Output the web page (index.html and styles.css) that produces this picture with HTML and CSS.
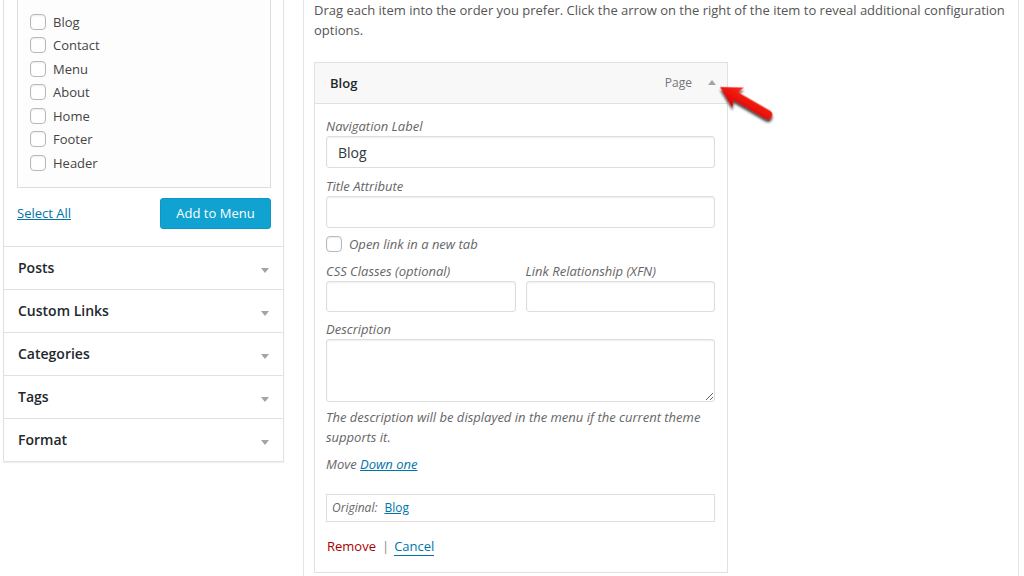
FILE: index.html
```html
<!DOCTYPE html>
<html lang="en">
<head>
<meta charset="utf-8">
<title>Menus</title>
<link rel="stylesheet" href="styles.css">
</head>
<body>
<div class="page">
  <aside class="side">
    <div class="pages-box">
      <ul class="checklist">
        <li><input type="checkbox" class="cb"><span>Blog</span></li>
        <li><input type="checkbox" class="cb"><span>Contact</span></li>
        <li><input type="checkbox" class="cb"><span>Menu</span></li>
        <li><input type="checkbox" class="cb"><span>About</span></li>
        <li><input type="checkbox" class="cb"><span>Home</span></li>
        <li><input type="checkbox" class="cb"><span>Footer</span></li>
        <li><input type="checkbox" class="cb"><span>Header</span></li>
      </ul>
      <div class="box-actions">
        <a href="#" class="link">Select All</a>
        <button class="btn-primary" type="button">Add to Menu</button>
      </div>
    </div>
    <div class="section"><h3 class="section-title">Posts</h3><span class="caret-down"></span></div>
    <div class="section"><h3 class="section-title">Custom Links</h3><span class="caret-down"></span></div>
    <div class="section"><h3 class="section-title">Categories</h3><span class="caret-down"></span></div>
    <div class="section"><h3 class="section-title">Tags</h3><span class="caret-down"></span></div>
    <div class="section"><h3 class="section-title">Format</h3><span class="caret-down"></span></div>
  </aside>

  <main class="menu-area">
    <p class="intro">Drag each item into the order you prefer. Click the arrow on the right of the item to reveal additional configuration options.</p>

    <div class="menu-item">
      <div class="item-bar">
        <span class="item-title">Blog</span>
        <span class="item-type">Page</span>
        <span class="caret-up"></span>
      </div>
      <div class="item-settings">
        <div class="field first">
          <label class="lbl">Navigation Label</label>
          <input class="text-input" type="text" value="Blog">
        </div>
        <div class="field">
          <label class="lbl">Title Attribute</label>
          <input class="text-input" type="text" value="">
        </div>
        <div class="check-row">
          <input type="checkbox" class="cb"><span class="lbl">Open link in a new tab</span>
        </div>
        <div class="field-pair">
          <div class="field">
            <label class="lbl">CSS Classes (optional)</label>
            <input class="text-input small" type="text" value="">
          </div>
          <div class="field">
            <label class="lbl">Link Relationship (XFN)</label>
            <input class="text-input small" type="text" value="">
          </div>
        </div>
        <div class="field desc">
          <label class="lbl">Description</label>
          <textarea class="text-area"></textarea>
        </div>
        <p class="help">The description will be displayed in the menu if the current theme supports it.</p>
        <p class="move"><span class="lbl">Move</span> <a href="#" class="link italic">Down one</a></p>
        <div class="original"><span class="orig-label">Original:</span> <a href="#" class="link">Blog</a></div>
        <div class="item-actions">
          <a href="#" class="remove">Remove</a>
          <span class="sep">|</span>
          <a href="#" class="cancel">Cancel</a>
        </div>
      </div>

      <svg class="callout-arrow" width="70" height="52" viewBox="0 0 70 52" aria-hidden="true">
        <defs>
          <filter id="sh" x="-30%" y="-30%" width="160%" height="160%">
            <feDropShadow dx="1.5" dy="2.5" stdDeviation="1.3" flood-color="#000" flood-opacity="0.75"/>
          </filter>
          <linearGradient id="rg" x1="0" y1="0" x2="0" y2="1">
            <stop offset="0" stop-color="#ff2a1a"/>
            <stop offset="1" stop-color="#d80000"/>
          </linearGradient>
        </defs>
        <g transform="translate(5 6) rotate(30)" filter="url(#sh)">
          <path d="M0 0 L21 -11.5 L18 -4.6 L55 -4.6 Q59.6 -4.6 59.6 0 Q59.6 4.6 55 4.6 L18 4.6 L21 11.5 Z" fill="url(#rg)"/>
        </g>
      </svg>
    </div>
  </main>
</div>
</body>
</html>
```

FILE: styles.css
```css
* { box-sizing: border-box; }

html, body {
  margin: 0;
  padding: 0;
  background: #fff;
}

body {
  font-family: "Open Sans", "Liberation Sans", sans-serif;
  font-size: 13px;
  line-height: 20px;
  color: #444;
}

.page {
  display: flex;
  align-items: flex-start;
  height: 576px;
  overflow: hidden;
}

/* ---------- left column ---------- */
.side {
  width: 281px;
  margin-left: 3px;
  border: 1px solid #e1e1e1;
  border-top: none;
  background: #fff;
  box-shadow: 0 1px 1px rgba(0, 0, 0, 0.06);
}

.pages-box {
  padding: 0 12px 17px 13px;
  border-bottom: 1px solid #e1e1e1;
}

.checklist {
  list-style: none;
  margin: 0;
  padding: 10px 0 12px 12px;
  border: 1px solid #dddddd;
  border-top: none;
  background: #fdfdfd;
}

.checklist li {
  display: flex;
  align-items: center;
  height: 23.5px;
  color: #444;
}

.cb {
  -webkit-appearance: none;
  appearance: none;
  width: 16px;
  height: 16px;
  margin: 0 7px 0 0;
  border: 1px solid #b4b9be;
  border-radius: 4px;
  background: #fff;
  box-shadow: inset 0 1px 2px rgba(0, 0, 0, 0.08);
  flex: none;
}

.box-actions {
  display: flex;
  justify-content: space-between;
  align-items: center;
  margin-top: 10px;
}

.link {
  color: #0073aa;
  text-decoration: underline;
}

.link.italic { font-style: italic; }

.btn-primary {
  font-family: inherit;
  font-size: 13px;
  height: 31px;
  width: 111px;
  padding: 0 10px;
  border: 1px solid #0c97c4;
  border-radius: 3px;
  background: #10a2d0;
  color: #fff;
}

.section {
  display: flex;
  align-items: center;
  justify-content: space-between;
  height: 43px;
  padding: 0 14px;
  border-bottom: 1px solid #e1e1e1;
}

.section:last-child { border-bottom: none; height: 42px; }

.section-title {
  margin: 0;
  font-size: 14px;
  font-weight: 600;
  color: #23282d;
}

.caret-down {
  width: 0;
  height: 0;
  margin-top: 6px;
  border-left: 4px solid transparent;
  border-right: 4px solid transparent;
  border-top: 5px solid #a0a5aa;
}

/* ---------- right column ---------- */
.menu-area {
  width: 716px;
  height: 576px;
  margin-left: 19px;
  padding: 1px 8px 0 10px;
  border-left: 1px solid #e5e5e5;
  border-right: 1px solid #e5e5e5;
}

.intro {
  margin: 0 0 22px;
  line-height: 19.5px;
  color: #555;
}

.menu-item {
  position: relative;
  width: 414px;
  border: 1px solid #e1e1e1;
  background: #fff;
}

.item-bar {
  display: flex;
  align-items: center;
  height: 41px;
  padding: 0 10px 0 15px;
  border-bottom: 1px solid #e1e1e1;
  background: #f8f8f8;
}

.item-title {
  font-weight: 600;
  color: #23282d;
  flex: 1;
}

.item-type {
  font-size: 12px;
  color: #72777c;
  margin-right: 16px;
}

.caret-up {
  width: 0;
  height: 0;
  margin-top: -1px;
  margin-right: 1px;
  border-left: 4.5px solid transparent;
  border-right: 4.5px solid transparent;
  border-bottom: 5px solid #a0a5aa;
}

.item-settings {
  padding: 12px 12px 16px 11px;
}

.lbl {
  font-style: italic;
  color: #666;
}

.field {
  display: flex;
  flex-direction: column;
  margin-bottom: 7px;
}

.field.first { margin-bottom: 8px; }

.text-input {
  height: 32px;
  width: 100%;
  padding: 0 11px;
  font-family: inherit;
  font-size: 14px;
  color: #32373c;
  border: 1px solid #dddddd;
  border-radius: 3px;
  background: #fff;
  box-shadow: inset 0 1px 2px rgba(0, 0, 0, 0.07);
}

.text-input.small { height: 31px; }

.check-row {
  display: flex;
  align-items: center;
  height: 20px;
  margin: -1px 0 7px;
}

.check-row .cb { margin-right: 7px; }

.field-pair {
  display: grid;
  grid-template-columns: 1fr 1fr;
  gap: 10px;
}

.text-area {
  display: block;
  width: 100%;
  height: 63px;
  font-family: inherit;
  border: 1px solid #dddddd;
  border-radius: 3px;
  box-shadow: inset 0 1px 2px rgba(0, 0, 0, 0.07);
  resize: vertical;
}

.field.desc { margin-bottom: 5px; }

.help {
  margin: 0;
  font-style: italic;
  color: #666;
}

.move {
  margin: 7px 0 0;
}

.original {
  display: flex;
  align-items: center;
  gap: 7px;
  height: 28px;
  margin-top: 20px;
  padding: 0 5px;
  border: 1px solid #dddddd;
  font-size: 12px;
}

.orig-label {
  font-style: italic;
  color: #666;
}

.item-actions {
  display: flex;
  align-items: center;
  margin-top: 14px;
  padding-left: 1px;
}

.remove {
  color: #a00;
  text-decoration: none;
}

.sep {
  color: #888;
  margin: 0 5px 0 6px;
}

.cancel {
  color: #0073aa;
  text-decoration: none;
  border-bottom: 1px solid #0073aa;
  line-height: 18px;
}

.callout-arrow {
  position: absolute;
  left: 400px;
  top: 18px;
  overflow: visible;
}
```
